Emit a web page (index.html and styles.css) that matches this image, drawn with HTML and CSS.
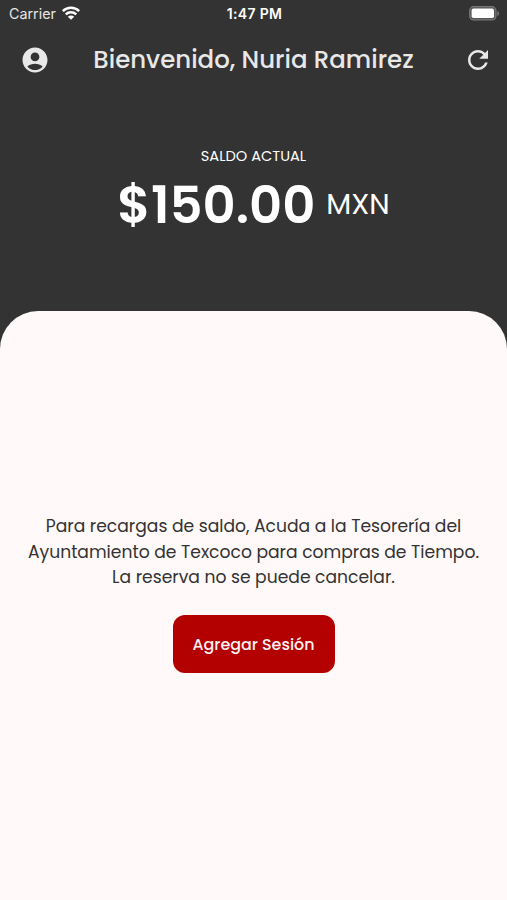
FILE: index.html
```html
<!DOCTYPE html>
<html lang="es">
<head>
<meta charset="utf-8">
<title>Saldo</title>
<link rel="stylesheet" href="styles.css">
</head>
<body>
<div class="status">
  <div class="network"><span class="carrier">Carrier</span>
    <svg class="wifi" width="18" height="14" viewBox="0 0 18 14" fill="none" stroke="#fff" stroke-width="2.5"><path d="M.8 5.1a11.7 11.7 0 0 1 16.4 0M3.8 8.4a7.4 7.4 0 0 1 10.4 0"/><path d="M9 13.8 5.8 10.8a4.6 4.6 0 0 1 6.4 0Z" fill="#fff" stroke="none"/></svg>
  </div>
  <time class="clock">1:47 PM</time>
  <svg class="battery" width="31" height="15" viewBox="0 0 31 15"><rect x=".7" y=".7" width="26.2" height="13.2" rx="4" fill="#555" stroke="#777" stroke-width="1.3"/><rect x="2.6" y="2.6" width="22.4" height="9.4" rx="1.8" fill="#fff"/><path d="M28.3 5v5c2.4-1.2 2.4-3.8 0-5Z" fill="#777"/></svg>
</div>
<header class="bar">
  <svg class="icon" width="30" height="30" viewBox="0 0 24 24" fill="#e8e8e8"><path d="M12 2C6.48 2 2 6.48 2 12s4.48 10 10 10 10-4.48 10-10S17.52 2 12 2zm0 4c1.93 0 3.5 1.57 3.5 3.5S13.93 13 12 13s-3.5-1.57-3.5-3.5S10.07 6 12 6zm0 14c-2.03 0-4.43-.82-6.14-2.88C7.55 15.8 9.68 15 12 15s4.45.8 6.14 2.12C16.43 19.18 14.03 20 12 20z"/></svg>
  <h1 class="title">Bienvenido, Nuria Ramirez</h1>
  <svg class="icon" width="30" height="30" viewBox="0 0 24 24" fill="#e8e8e8"><path d="M17.65 6.35C16.2 4.9 14.21 4 12 4c-4.42 0-7.99 3.58-7.99 8s3.57 8 7.99 8c3.73 0 6.84-2.55 7.73-6h-2.08c-.82 2.33-3.04 4-5.65 4-3.31 0-6-2.69-6-6s2.69-6 6-6c1.66 0 3.14.69 4.22 1.78L13 11h7V4l-2.35 2.35z"/></svg>
</header>
<section class="balance">
  <div class="label">SALDO ACTUAL</div>
  <div class="amount"><span class="value">$150.00</span><span class="currency">MXN</span></div>
</section>
<main class="sheet">
  <p class="notice">Para recargas de saldo, Acuda a la Tesorería del<br>Ayuntamiento de Texcoco para compras de Tiempo.<br>La reserva no se puede cancelar.</p>
  <button class="add">Agregar Sesión</button>
</main>
</body>
</html>
```
FILE: styles.css
```css
* { box-sizing: border-box; }
body {
  margin: 0;
  height: 900px;
  display: flex;
  flex-direction: column;
  background: #333;
  color: #fff;
  font-family: Poppins, Inter, sans-serif;
  overflow: hidden;
}
.status {
  height: 28px;
  padding: 0 7px 0 9px;
  display: grid;
  grid-template-columns: 1fr auto 1fr;
  align-items: center;
  font-family: Inter, sans-serif;
  font-size: 14.3px;
  line-height: 18px;
}
.network { display: flex; align-items: center; gap: 6px; color: #e6e6e6; }
.wifi { margin-top: -2px; }
.clock { font-weight: 600; font-size: 14px; letter-spacing: .35px; }
.battery { justify-self: end; margin-top: -1px; }
.bar {
  height: 64px;
  padding: 0 14px 0 20px;
  display: flex;
  align-items: center;
  justify-content: space-between;
}
.icon { flex: none; }
.title { margin: 0 6px 0 0; font-size: 24.45px; font-weight: 500; line-height: 36px; color: #e8e8e8; white-space: nowrap; }
.balance {
  height: 219px;
  padding-top: 53px;
  display: flex;
  flex-direction: column;
  align-items: center;
}
.label { font-size: 14.6px; line-height: 22px; }
.amount { height: 76px; display: flex; align-items: center; gap: 11px; line-height: 76px; white-space: nowrap; }
.value { font-size: 51.3px; font-weight: 600; }
.currency { padding-bottom: 3px; font-size: 29px; }
.sheet {
  flex: 1;
  padding-top: 203px;
  border-radius: 38px 38px 0 0;
  background: #fff9f9;
  color: #333;
  display: flex;
  flex-direction: column;
  align-items: center;
}
.notice { margin: 0 0 24px; font-size: 17.15px; line-height: 25.7px; text-align: center; white-space: nowrap; }
.add {
  width: 162px;
  height: 58px;
  padding: 2px 0 0;
  border: 0;
  border-radius: 12px;
  background: #b30000;
  color: #fff3f3;
  font: 500 15.9px/24px Poppins, Inter, sans-serif;
}
```
